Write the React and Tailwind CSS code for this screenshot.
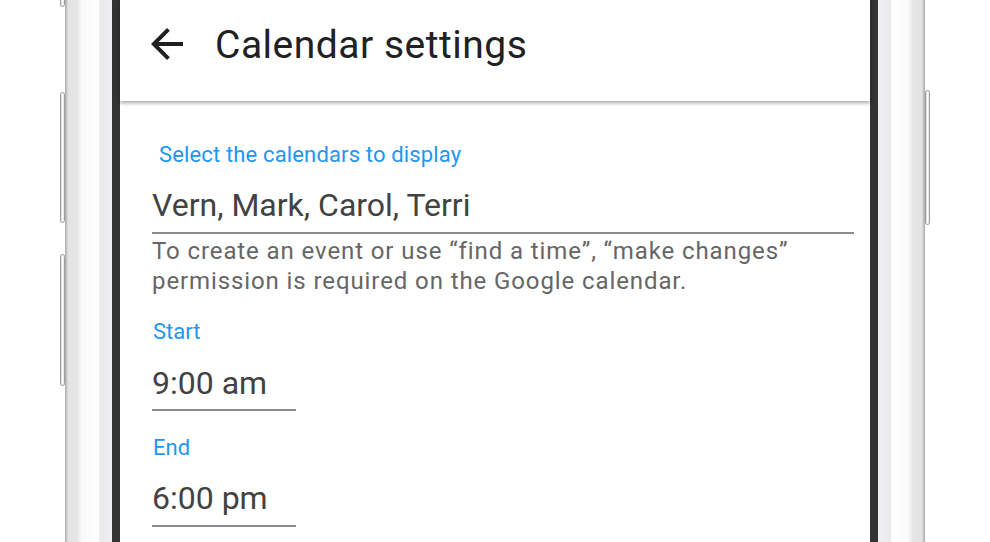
import React from 'react';

const font = { fontFamily: 'Roboto, "Noto Sans", sans-serif' };

function SideButton({ className }) {
  return (
    <div
      className={`w-[5px] rounded-[3px] border border-[#9c9c9c] bg-[linear-gradient(to_right,#d4d4d4,#ffffff_50%,#e2e2e2)] ${className}`}
    />
  );
}

function UnderlineField({ value, className }) {
  return (
    <div className={`border-b-2 border-[#8c8c8c] ${className}`}>
      <div className="text-[32px] leading-[40px] text-[#424242]">{value}</div>
    </div>
  );
}

export default function App() {
  return (
    <div className="flex h-[542px] w-[990px] overflow-hidden bg-white" style={font}>
      <div className="w-[60px]" />

      {/* left side buttons */}
      <div className="flex w-[5px] flex-col">
        <SideButton className="h-[11px] -mt-[4px]" />
        <SideButton className="mt-[85px] h-[131px]" />
        <SideButton className="mt-[31px] h-[132px]" />
      </div>

      {/* left body */}
      <div className="w-[47px] bg-[linear-gradient(to_right,#a9a9a9_0px,#cccccc_2px,#e3e3e3_3px,#e6e6e6_12px,#fafafa_17px,#ffffff_33px,#ebebed_35px,#eeeff1_47px)]" />
      <div className="w-[8px] bg-[#333333]" />

      {/* screen */}
      <div className="flex w-[750px] flex-col bg-white">
        <div className="relative z-10 flex h-[101px] items-center bg-white pb-[10px] shadow-[0_2px_4px_rgba(0,0,0,0.35)]">
          <svg viewBox="0 0 24 24" className="ml-[23px] mb-[3px] h-[48px] w-[48px]" fill="#1f1f1f">
            <path d="M20 11H7.83l5.59-5.59L12 4l-8 8 8 8 1.41-1.41L7.83 13H20v-2z" />
          </svg>
          <h1 className="ml-[24px] text-[39px] leading-none tracking-[0.5px] text-[#212121]">Calendar settings</h1>
        </div>

        <div className="flex flex-col pl-[32px] pr-[16px] pt-[41px]">
          <div className="ml-[7px] text-[22px] leading-[26px] tracking-[0.15px] text-[#2196f3]">Select the calendars to display</div>
          <UnderlineField value="Vern, Mark, Carol, Terri" className="mt-[17px] pb-[7px]" />
          <p className="mt-[2px] text-[24px] leading-[30px] tracking-[0.9px] text-[#666666]">
            To create an event or use “find a time”, “make changes”
            <br />
            permission is required on the Google calendar.
          </p>

          <div className="mt-[23px] ml-[1px] text-[22px] leading-[26px] text-[#2196f3]">Start</div>
          <UnderlineField value="9:00 am" className="mt-[18px] w-[144px] pb-[6px]" />

          <div className="mt-[24px] ml-[1px] text-[22px] leading-[26px] text-[#2196f3]">End</div>
          <UnderlineField value="6:00 pm" className="mt-[17px] w-[144px] pb-[7px]" />
        </div>
      </div>

      <div className="w-[8px] bg-[#333333]" />
      {/* right body */}
      <div className="w-[47px] bg-[linear-gradient(to_left,#a9a9a9_0px,#cccccc_2px,#e3e3e3_3px,#e6e6e6_12px,#fafafa_17px,#ffffff_33px,#ebebed_35px,#eeeff1_47px)]" />

      {/* right side button */}
      <div className="flex w-[5px] flex-col">
        <SideButton className="mt-[90px] h-[135px]" />
      </div>
      <div className="w-[60px]" />
    </div>
  );
}
